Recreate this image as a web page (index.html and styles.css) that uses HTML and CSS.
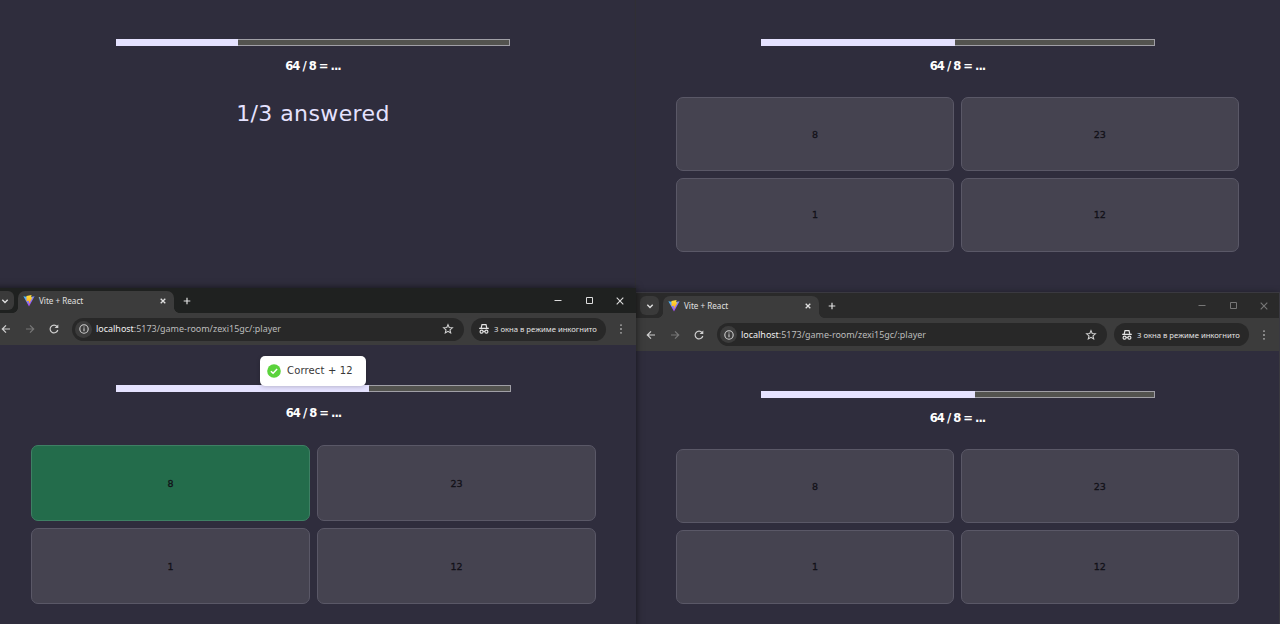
FILE: index.html
```html
<!DOCTYPE html>
<html lang="ru">
<head>
<meta charset="utf-8">
<title>Vite + React</title>
<link rel="stylesheet" href="styles.css">
</head>
<body>
<svg class="sprite" aria-hidden="true">
  <defs>
    <linearGradient id="vite-blue" x1="0" y1="0" x2="0.6" y2="1"><stop offset="0" stop-color="#41c8ff"/><stop offset="1" stop-color="#b43cf5"/></linearGradient>
    <linearGradient id="vite-gold" x1="0" y1="0" x2="0" y2="1"><stop offset="0" stop-color="#ffe03c"/><stop offset="1" stop-color="#ffa414"/></linearGradient>
  </defs>
  <symbol id="chevron" viewBox="0 0 12 12"><path d="M3.3 4.7 6 7.4l2.7-2.7" fill="none" stroke="currentColor" stroke-width="1.4"/></symbol>
  <symbol id="vite" viewBox="0 0 12 12"><path d="M.4 1.3 6 11.6 11.6 1.3 6 2.3z" fill="url(#vite-blue)"/><path d="M3.4 1 8.6 0l-.7 2.5 1.7-.2-3.8 6.9.2-3.4-2.4.4z" fill="url(#vite-gold)"/></symbol>
  <symbol id="cross" viewBox="0 0 12 12"><path d="m3.7 3.7 4.6 4.6m0-4.6L3.7 8.3" stroke="currentColor" stroke-width="1.3"/></symbol>
  <symbol id="plus" viewBox="0 0 12 12"><path d="M6 2.7v6.6M2.7 6h6.6" stroke="currentColor" stroke-width="1.2"/></symbol>
  <symbol id="minimize" viewBox="0 0 12 12"><path d="M2.5 5.5h7" stroke="currentColor"/></symbol>
  <symbol id="maximize" viewBox="0 0 12 12"><path d="M3.5 2.5h6v6h-6z" fill="none" stroke="currentColor"/></symbol>
  <symbol id="close" viewBox="0 0 12 12"><path d="m2.7 2.7 6.6 6.6m0-6.6L2.7 9.3" stroke="currentColor" stroke-width="1.1"/></symbol>
  <symbol id="arrow" viewBox="0 0 12 12"><path d="M10 6H2.7M6 2.3 2.3 6 6 9.7" fill="none" stroke="currentColor" stroke-width="1.2"/></symbol>
  <symbol id="reload" viewBox="0 0 12 12"><path d="M9.8 7A3.9 3.9 0 1 1 9.1 3.6" fill="none" stroke="currentColor" stroke-width="1.2"/><path d="M10.3 1.4v3.7H6.6z" fill="currentColor"/></symbol>
  <symbol id="info" viewBox="0 0 12 12"><circle cx="6" cy="6" r="4.2" fill="none" stroke="currentColor" stroke-width="1.1"/><path d="M6 5.3v3M6 3.5v1.1" stroke="currentColor" stroke-width="1.1"/></symbol>
  <symbol id="star" viewBox="0 0 12 12"><path d="m6 1.6 1.2 2.9 3.2.3L8 6.9l.7 3.1L6 8.4 3.3 10 4 6.9 1.6 4.8l3.2-.3z" fill="none" stroke="currentColor" stroke-width="1.1"/></symbol>
  <symbol id="incognito" viewBox="0 0 12 12"><path d="M3.2 4.9 4 1.6h4l.8 3.3M1.2 5.4h9.6M5 8.6q1-.6 2 0" fill="none" stroke="currentColor" stroke-width="1.2"/><circle cx="3.6" cy="8.7" r="1.5" fill="none" stroke="currentColor" stroke-width="1.2"/><circle cx="8.4" cy="8.7" r="1.5" fill="none" stroke="currentColor" stroke-width="1.2"/></symbol>
  <symbol id="dots" viewBox="0 0 12 12"><path d="M5.3 1.4h1.4v1.4H5.3zM5.3 5.3h1.4v1.4H5.3zM5.3 9.2h1.4v1.4H5.3z" fill="currentColor"/></symbol>
  <symbol id="check" viewBox="0 0 14 14"><circle cx="7" cy="7" r="6.8" fill="#5bd33c"/><path d="m3.9 7.2 2.2 2.1 4-4.2" fill="none" stroke="#fff" stroke-width="1.5"/></symbol>
</svg>

<main class="desktop">
  <section class="window host">
    <div class="game">
      <div class="progress"><div class="progress-fill" style="width:122px"></div></div>
      <h2 class="question">64 / 8 = ...</h2>
      <p class="answered">1/3 answered</p>
    </div>
  </section>

  <section class="window player-top">
    <div class="game">
      <div class="progress"><div class="progress-fill" style="width:194px"></div></div>
      <h2 class="question">64 / 8 = ...</h2>
      <div class="answers"><button class="answer">8</button><button class="answer">23</button><button class="answer">1</button><button class="answer">12</button></div>
    </div>
  </section>

  <section class="window player-right">
    <header class="tabs">
      <span class="tab-list"><svg class="icon"><use href="#chevron"/></svg></span>
      <div class="tab"><svg class="icon"><use href="#vite"/></svg><span class="tab-title">Vite + React</span><svg class="icon"><use href="#cross"/></svg></div>
      <svg class="icon new-tab"><use href="#plus"/></svg>
      <div class="controls"><svg class="icon"><use href="#minimize"/></svg><svg class="icon"><use href="#maximize"/></svg><svg class="icon"><use href="#close"/></svg></div>
    </header>
    <nav class="toolbar">
      <div class="nav-buttons"><svg class="icon"><use href="#arrow"/></svg><svg class="icon forward"><use href="#arrow"/></svg><svg class="icon"><use href="#reload"/></svg></div>
      <div class="address"><span class="site-info"><svg class="icon"><use href="#info"/></svg></span><span class="url"><span class="url-host">localhost</span>:5173/game-room/zexi15gc/:player</span><svg class="icon"><use href="#star"/></svg></div>
      <div class="incognito"><svg class="icon"><use href="#incognito"/></svg><span class="incognito-label">3 окна в режиме инкогнито</span></div>
      <svg class="icon"><use href="#dots"/></svg>
    </nav>
    <div class="game">
      <div class="progress"><div class="progress-fill" style="width:214px"></div></div>
      <h2 class="question">64 / 8 = ...</h2>
      <div class="answers"><button class="answer">8</button><button class="answer">23</button><button class="answer">1</button><button class="answer">12</button></div>
    </div>
  </section>

  <section class="window player-left active">
    <header class="tabs">
      <span class="tab-list"><svg class="icon"><use href="#chevron"/></svg></span>
      <div class="tab"><svg class="icon"><use href="#vite"/></svg><span class="tab-title">Vite + React</span><svg class="icon"><use href="#cross"/></svg></div>
      <svg class="icon new-tab"><use href="#plus"/></svg>
      <div class="controls"><svg class="icon"><use href="#minimize"/></svg><svg class="icon"><use href="#maximize"/></svg><svg class="icon"><use href="#close"/></svg></div>
    </header>
    <nav class="toolbar">
      <div class="nav-buttons"><svg class="icon"><use href="#arrow"/></svg><svg class="icon forward"><use href="#arrow"/></svg><svg class="icon"><use href="#reload"/></svg></div>
      <div class="address"><span class="site-info"><svg class="icon"><use href="#info"/></svg></span><span class="url"><span class="url-host">localhost</span>:5173/game-room/zexi15gc/:player</span><svg class="icon"><use href="#star"/></svg></div>
      <div class="incognito"><svg class="icon"><use href="#incognito"/></svg><span class="incognito-label">3 окна в режиме инкогнито</span></div>
      <svg class="icon"><use href="#dots"/></svg>
    </nav>
    <div class="game">
      <div class="progress"><div class="progress-fill" style="width:253px"></div></div>
      <h2 class="question">64 / 8 = ...</h2>
      <div class="answers"><button class="answer correct">8</button><button class="answer">23</button><button class="answer">1</button><button class="answer">12</button></div>
      <div class="toast"><svg class="toast-icon"><use href="#check"/></svg><span class="toast-text">Correct + 12</span></div>
    </div>
  </section>
</main>
</body>
</html>
```

FILE: styles.css
```css
* { box-sizing: border-box; }

body {
  margin: 0;
  background: #2f2d3d;
  font-family: "Noto Sans", "Open Sans", sans-serif;
}

.sprite { position: absolute; width: 0; height: 0; }

.desktop {
  position: relative;
  width: 1280px;
  height: 624px;
  overflow: hidden;
}

.window {
  position: absolute;
  width: 644px;
  background: #2f2d3d;
}

.host { left: -9px; top: 0; height: 288px; }
.player-top { left: 636px; top: 0; height: 293px; width: 643px; box-shadow: -1px 0 1px #302f35; }
.player-right { left: 636px; top: 293px; height: 340px; width: 643px; box-shadow: 0 0 0 1px #3a3940, 0 0 7px #0006; }
.player-left { left: -9px; top: 288px; height: 340px; width: 645px; box-shadow: 0 0 7px #0009; }

.icon { display: block; width: 12px; height: 12px; flex: none; }

/* Browser chrome */
.tabs {
  display: flex;
  align-items: center;
  height: 25px;
  padding-left: 4px;
  background: #2a2a2a;
  color: #e0e0e0;
}
.active .tabs { background: #1f2120; }

.tab-list {
  display: grid;
  place-items: center;
  width: 19px;
  height: 19px;
  margin-right: 4px;
  border-radius: 6px;
  background: #3a3a3a;
}

.tab {
  position: relative;
  display: flex;
  align-items: center;
  align-self: flex-end;
  width: 156px;
  height: 22px;
  padding: 0 5px 2px;
  border-radius: 7px 7px 0 0;
  background: #3c3c3c;
}
.tab::before, .tab::after {
  content: "";
  position: absolute;
  bottom: 0;
  width: 5px;
  height: 5px;
}
.tab::before { left: -5px; background: radial-gradient(circle at 0 0, transparent 4.5px, #3c3c3c 5px); }
.tab::after { right: -5px; background: radial-gradient(circle at 100% 0, transparent 4.5px, #3c3c3c 5px); }

.tab-title { flex: 1; margin-left: 4px; font-size: 8.1px; line-height: 12px; white-space: nowrap; }
.new-tab { margin-left: 7px; }

.controls { display: flex; gap: 19px; margin-left: auto; margin-right: 9px; color: #777; }
.active .controls { margin-right: 10px; color: #ddd; }

.toolbar {
  display: flex;
  align-items: center;
  height: 33px;
  padding: 0 9px;
  background: #3c3c3c;
  color: #d0d0d0;
}
.active .toolbar { height: 32px; }
.nav-buttons { display: flex; gap: 12px; width: 72px; flex: none; }
.forward { transform: scaleX(-1); color: #777; }

.address {
  display: flex;
  align-items: center;
  flex: 1;
  height: 23px;
  padding: 0 10px 0 3px;
  border-radius: 12px;
  background: #282828;
}
.site-info { display: grid; place-items: center; width: 17px; height: 17px; border-radius: 50%; background: #3c3c3c; }
.url { flex: 1; margin-left: 4px; font-size: 8.96px; line-height: 14px; color: #bdbdbd; white-space: nowrap; }
.url-host { color: #f0f0f0; }

.incognito {
  display: flex;
  align-items: center;
  width: 135px;
  height: 23px;
  margin: 0 9px 0 7px;
  padding-left: 7px;
  border-radius: 12px;
  background: #282828;
  color: #e3e3e3;
}
.incognito-label { margin-left: 4px; font-size: 7.7px; line-height: 12px; white-space: nowrap; }

/* Game page */
.game {
  position: relative;
  display: flex;
  flex-direction: column;
  align-items: center;
  padding: 39px 0 0;
  font-family: "DejaVu Sans", sans-serif;
}
.player-right .game { padding-top: 40px; }
.active .game { padding-top: 40px; }

.progress {
  width: 394px;
  height: 7px;
  border: 1px solid #a09fa6;
  background: #53534f;
}
.active .progress { width: 395px; }
.progress-fill { height: 7px; margin: -1px 0 0 -1px; background: #e5e2ff; }

.question {
  margin: 12px 0 0;
  color: #fff;
  font-size: 11.6px;
  font-weight: 700;
  line-height: 16px;
  letter-spacing: -1px;
  white-space: pre;
}
.active .question { margin-top: 13px; }

.answered {
  margin: 26px 0 0;
  color: #e5e2ff;
  font-size: 22px;
  line-height: 28px;
  letter-spacing: 0.4px;
}

.answers {
  display: grid;
  grid-template-columns: 1fr 1fr;
  grid-auto-rows: 74px;
  gap: 6.5px;
  width: 563px;
  margin-top: 23px;
}
.active .answers { grid-auto-rows: 76px; gap: 7px; width: 565px; margin-top: 24px; }

.answer {
  padding: 1px 0 0;
  border: 1px solid #5a5867;
  border-radius: 7px;
  background: #454350;
  color: #121118;
  font: 9.5px/14px "DejaVu Sans", sans-serif;
  -webkit-text-stroke: 0.3px #121118;
}
.correct { border-color: #3e8064; background: #236c4b; }

.toast {
  position: absolute;
  top: 11px;
  left: 269px;
  display: flex;
  align-items: center;
  width: 106px;
  height: 30px;
  padding-left: 7px;
  border-radius: 5px;
  background: #fff;
  box-shadow: 0 1px 4px #0003;
}
.toast-icon { width: 14px; height: 14px; }
.toast-text { margin-left: 6px; color: #373737; font-size: 10px; line-height: 14px; letter-spacing: 0.15px; white-space: nowrap; }
```
